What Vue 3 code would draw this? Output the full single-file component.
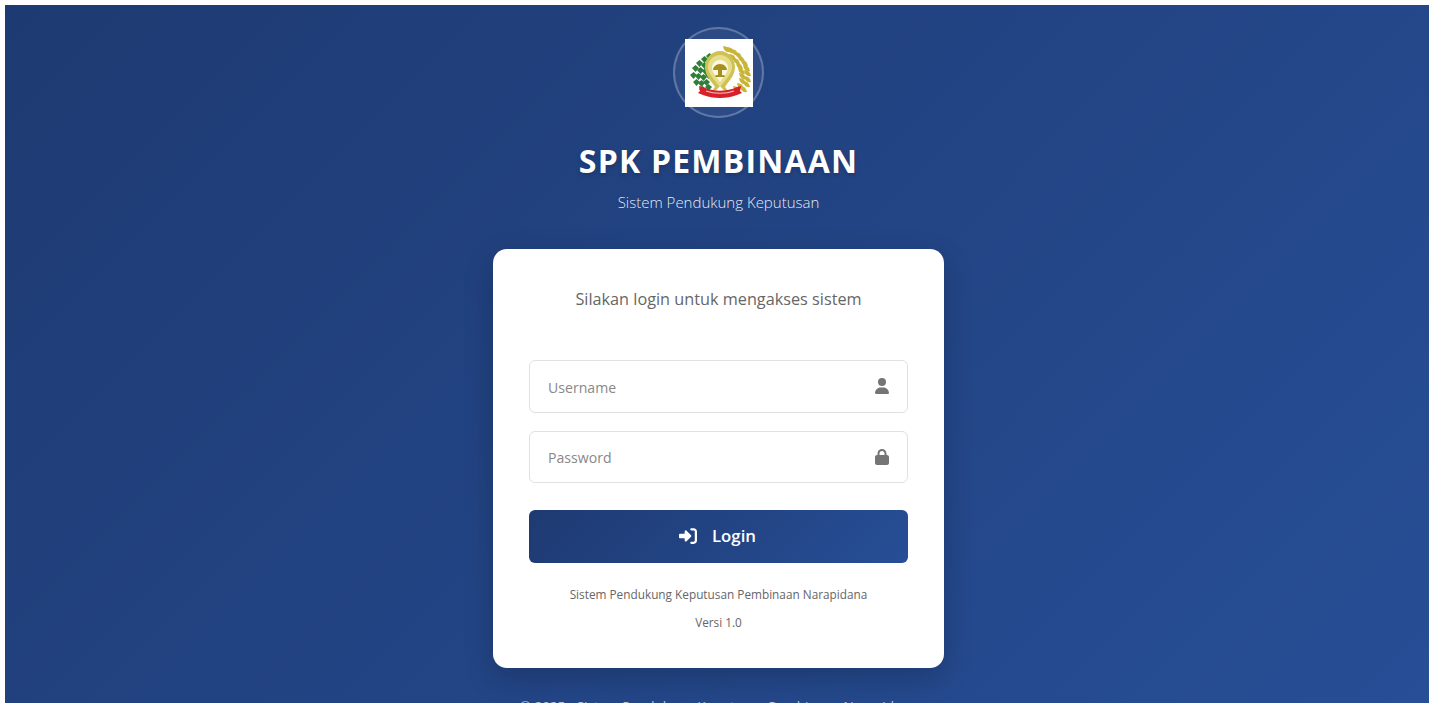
<script setup>
// daun kiri dan bulir padi kanan pada lambang
const leaves = [
  [16, 20], [21, 17], [11, 24], [16, 26], [21, 23], [7, 29], [12, 31], [17, 32], [22, 29],
  [5, 36], [10, 37], [15, 38], [20, 36], [8, 43], [13, 44], [18, 43], [14, 50], [20, 48]
]
const grains = [
  [38, 7], [42, 8], [46, 10], [50, 13], [44, 15], [53, 17], [48, 19], [56, 21], [51, 24],
  [58, 26], [53, 29], [59, 31], [54, 34], [59, 37], [54, 39], [58, 42], [52, 44], [55, 47], [48, 47]
]
</script>

<template>
  <div class="page">
    <main class="screen">
      <header class="brand">
        <div class="logo-ring">
          <svg class="logo" viewBox="0 0 68 68">
            <rect width="68" height="68" fill="#fff" />
            <path v-for="(l, i) in leaves" :key="'l' + i" :d="`M${l[0]} ${l[1]}l3.500-3 3.500 3-3.500 4z`" fill="#2e8036" />
            <path v-for="(g, i) in grains" :key="'g' + i" :d="`M${g[0]} ${g[1]}q6 0 7 6q-6 1-7-6z`" fill="#c8b437" />
            <path d="M35 12c-9 0-15 8-15 16 0 9 7 15 10 20l-4 5h4l5-6 5 6h4l-4-5c3-5 10-11 10-20 0-8-6-16-15-16z" fill="#cfc253" />
            <path d="M35 16c-7 0-12 6-12 12 0 7 7 13 12 20 5-7 12-13 12-20 0-6-5-12-12-12z" fill="#e6de8c" />
            <path d="M35 21c-5 0-8 4-8 8 0 5 5 9 8 14 3-5 8-9 8-14 0-4-3-8-8-8z" fill="#fbf9e2" />
            <path d="M35 25c-4 0-7 3-7 6h5v5h-2l-1 2h10l-1-2h-2v-5h5c0-3-3-6-7-6z" fill="#a98f1e" />
            <path d="M14 47l4 1c10 5 24 5 34 0l4-1-1 5 2 2-5 2c-10 4-24 4-34 0l-5-2 2-2z" fill="#d81f2a" />
            <path d="M21 52c8 3 20 3 28 0" stroke="#f6c9cc" stroke-width="1.200" fill="none" />
          </svg>
        </div>
        <h1>SPK PEMBINAAN</h1>
        <p>Sistem Pendukung Keputusan</p>
      </header>

      <section class="card">
        <h2>Silakan login untuk mengakses sistem</h2>
        <form class="form" @submit.prevent>
          <label class="field">
            <input type="text" placeholder="Username" />
            <svg viewBox="0 0 448 512"><path d="M224 256a128 128 0 1 0 0-256 128 128 0 1 0 0 256zm-45.700 48C79.800 304 0 383.800 0 482.300 0 498.700 13.300 512 29.700 512h388.600c16.400 0 29.700-13.300 29.700-29.700C448 383.800 368.200 304 269.700 304h-91.400z" /></svg>
          </label>
          <label class="field">
            <input type="password" placeholder="Password" />
            <svg viewBox="0 0 448 512"><path d="M144 144v48h160v-48c0-44.200-35.800-80-80-80s-80 35.800-80 80zM80 192v-48C80 64.500 144.500 0 224 0s144 64.500 144 144v48h16c35.300 0 64 28.700 64 64v192c0 35.300-28.700 64-64 64H64c-35.300 0-64-28.700-64-64V256c0-35.300 28.700-64 64-64h16z" /></svg>
          </label>
          <button type="submit" class="login">
            <svg viewBox="0 0 512 512"><path d="M352 96h64c17.700 0 32 14.300 32 32v256c0 17.700-14.300 32-32 32h-64c-17.700 0-32 14.300-32 32s14.300 32 32 32h64c53 0 96-43 96-96V128c0-53-43-96-96-96h-64c-17.700 0-32 14.300-32 32s14.300 32 32 32zm-9.400 182.600c12.500-12.500 12.500-32.800 0-45.300l-128-128c-9.200-9.200-22.900-11.900-34.900-6.900S160 115.100 160 128v64H32c-17.700 0-32 14.300-32 32v64c0 17.700 14.300 32 32 32h128v64c0 12.900 7.800 24.600 19.800 29.600s25.700 2.200 34.900-6.900l128-128z" /></svg>
            <span>Login</span>
          </button>
        </form>
        <p class="note">Sistem Pendukung Keputusan Pembinaan Narapidana</p>
        <p class="version">Versi 1.0</p>
      </section>

      <footer class="foot">© 2025 - Sistem Pendukung Keputusan Pembinaan Narapidana</footer>
    </main>
  </div>
</template>

<style>
html, body {
  margin: 0;
  background: #fff;
  overflow: hidden;
}
</style>

<style scoped>
.page {
  box-sizing: border-box;
  width: 1430px;
  height: 704px;
  padding: 5px 1px 1px 5px;
  background: #fff;
  font-family: "Open Sans", "Noto Sans", sans-serif;
}
.screen {
  box-sizing: border-box;
  height: 100%;
  overflow: hidden;
  padding: 22px 0 0 3px;
  display: flex;
  flex-direction: column;
  align-items: center;
  background: linear-gradient(135deg, #1e3a72 0%, #274e96 100%);
  color: #fff;
}
.brand {
  display: flex;
  flex-direction: column;
  align-items: center;
}
.logo-ring {
  box-sizing: border-box;
  width: 91px;
  height: 91px;
  padding-left: 1px;
  border-radius: 50%;
  border: 2px solid rgba(255, 255, 255, 0.25);
  background: rgba(255, 255, 255, 0.05);
  display: flex;
  align-items: center;
  justify-content: center;
}
.logo {
  flex: none;
  width: 68px;
  height: 68px;
  display: block;
}
.brand h1 {
  margin: 22px 0 0;
  font-size: 32px;
  line-height: 42px;
  font-weight: 700;
  letter-spacing: 1.2px;
  text-shadow: 0 2px 4px rgba(0, 0, 0, 0.2);
}
.brand p {
  margin: 9px 0 0;
  font-size: 15px;
  line-height: 22px;
  font-weight: 300;
  color: rgba(255, 255, 255, 0.9);
}
.card {
  box-sizing: border-box;
  flex: none;
  width: 451px;
  height: 419px;
  margin-top: 36px;
  padding: 38px 36px 0;
  background: #fff;
  border-radius: 14px;
  box-shadow: 0 10px 30px rgba(0, 0, 0, 0.2);
  color: #666;
}
.card h2 {
  margin: 0;
  font-size: 16.250px;
  line-height: 24px;
  font-weight: 400;
  text-align: center;
}
.form {
  margin-top: 49px;
  display: flex;
  flex-direction: column;
}
.field {
  box-sizing: border-box;
  height: 52.500px;
  margin-bottom: 18px;
  padding: 0 18px;
  display: flex;
  align-items: center;
  border: 1px solid #dfe1e4;
  border-radius: 6px;
}
.field input {
  flex: 1;
  min-width: 0;
  padding: 2px 0 0;
  border: 0;
  outline: 0;
  background: none;
  font: 400 14.100px "Open Sans", "Noto Sans", sans-serif;
}
.field input::placeholder {
  color: #888;
  opacity: 1;
}
.field svg {
  width: 14px;
  height: 16px;
  fill: #757575;
}
.login {
  height: 52.500px;
  margin-top: 9px;
  padding: 0 2px 0 0;
  display: flex;
  align-items: center;
  justify-content: center;
  gap: 15px;
  border: 0;
  border-radius: 6px;
  background: linear-gradient(135deg, #1e3a72 0%, #274e96 100%);
  color: #fff;
  font: 600 16.800px "Open Sans", "Noto Sans", sans-serif;
}
.login svg {
  width: 18px;
  height: 18px;
  fill: #fff;
}
.login span {
  margin-bottom: 2px;
}
.note,
.version {
  margin: 0;
  font-size: 11.800px;
  line-height: 18px;
  text-align: center;
}
.note {
  margin-top: 22px;
}
.version {
  margin-top: 10px;
}
.foot {
  flex: none;
  margin-top: 29px;
  font-size: 13.500px;
  line-height: 18px;
  color: rgba(255, 255, 255, 0.7);
}
</style>
